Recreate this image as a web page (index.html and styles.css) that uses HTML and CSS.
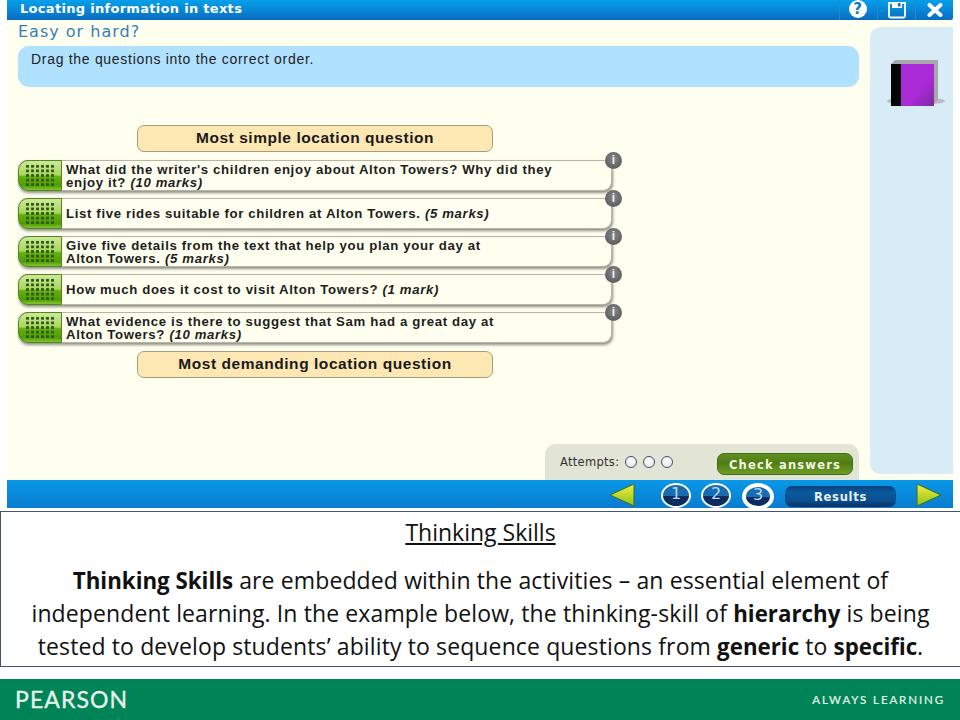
FILE: index.html
```html
<!DOCTYPE html>
<html lang="en">
<head>
<meta charset="utf-8">
<title>Thinking Skills</title>
<link rel="stylesheet" href="styles.css">
</head>
<body>
<section class="app">
  <header class="topbar">
    <span class="topbar-title">Locating information in texts</span>
    <div class="tools">
      <span class="tool"><span class="help">?</span></span>
      <span class="tool">
        <svg width="20" height="18" viewBox="0 0 20 18"><path d="M2 2h16v13a1.5 1.5 0 0 1-1.5 1.5h-13A1.500 1.500 0 0 1 2 15z" fill="none" stroke="#fff" stroke-width="1.8"/><path d="M5 1h10v6H5z" fill="#fff"/><rect x="11" y="2" width="2.500" height="3.500" fill="#0a78c8"/></svg>
      </span>
      <span class="tool">
        <svg width="16" height="14" viewBox="0 0 16 14"><path d="M2.500 2l11 10M13.500 2l-11 10" stroke="#fff" stroke-width="4" stroke-linecap="round"/></svg>
      </span>
    </div>
  </header>
  <div class="main">
    <div class="content">
      <h1 class="title">Easy or hard?</h1>
      <div class="instruction">Drag the questions into the correct order.</div>
      <div class="label">Most simple location question</div>
      <ul class="rows">
        <li class="row"><span class="handle"></span><p class="row-text">What did the writer's children enjoy about Alton Towers? Why did they<br>enjoy it? <em>(10 marks)</em></p><span class="info">i</span></li>
        <li class="row"><span class="handle"></span><p class="row-text">List five rides suitable for children at Alton Towers. <em>(5 marks)</em></p><span class="info">i</span></li>
        <li class="row"><span class="handle"></span><p class="row-text">Give five details from the text that help you plan your day at<br>Alton Towers. <em>(5 marks)</em></p><span class="info">i</span></li>
        <li class="row"><span class="handle"></span><p class="row-text">How much does it cost to visit Alton Towers? <em>(1 mark)</em></p><span class="info">i</span></li>
        <li class="row"><span class="handle"></span><p class="row-text">What evidence is there to suggest that Sam had a great day at<br>Alton Towers? <em>(10 marks)</em></p><span class="info">i</span></li>
      </ul>
      <div class="label label-end">Most demanding location question</div>
      <div class="spacer"></div>
      <div class="attempts">
        <span class="attempts-label">Attempts:</span>
        <span class="dot"></span><span class="dot"></span><span class="dot"></span>
        <span class="check">Check answers</span>
      </div>
    </div>
    <aside class="side">
      <svg class="book" width="60" height="50" viewBox="0 0 60 50">
        <defs>
          <linearGradient id="cover" x1="0" y1="0" x2="1" y2="1"><stop offset="0.6" stop-color="#a92bd8"/><stop offset="1" stop-color="#7a2a9c"/></linearGradient>
        </defs>
        <ellipse cx="29" cy="42" rx="29" ry="4" fill="#b8bcc0"/>
        <path d="M4 5l4-4h43v40l-4 4z" fill="#a9a9ad"/>
        <rect x="4" y="5" width="10" height="42" fill="#050505"/>
        <rect x="14" y="5" width="33" height="42" fill="url(#cover)"/>
      </svg>
    </aside>
  </div>
  <footer class="navbar">
    <svg class="arrow" width="26" height="24" viewBox="0 0 26 24"><defs><linearGradient id="ya" x1="0" y1="0" x2="0" y2="1"><stop offset="0" stop-color="#f4f03c"/><stop offset="1" stop-color="#8cc020"/></linearGradient></defs><path d="M1 12L25 1v22z" fill="url(#ya)" stroke="#3a6a20"/></svg>
    <span class="step">1</span>
    <span class="step">2</span>
    <span class="step step-current">3</span>
    <span class="results">Results</span>
    <svg class="arrow" width="26" height="24" viewBox="0 0 26 24"><path d="M25 12L1 1v22z" fill="url(#ya)" stroke="#3a6a20"/></svg>
  </footer>
</section>
<section class="note">
  <h2 class="note-title">Thinking Skills</h2>
  <p class="note-text"><b>Thinking Skills</b> are embedded within the activities – an essential element of independent learning. In the example below, the thinking-skill of <b>hierarchy</b> is being tested to develop students’ ability to sequence questions from <b>generic</b> to <b>specific</b>.</p>
</section>
<footer class="brand">
  <span class="brand-name">PEARSON</span>
  <span class="brand-tag">ALWAYS LEARNING</span>
</footer>
</body>
</html>
```
FILE: styles.css
```css
* { box-sizing: border-box; }
html, body { margin: 0; padding: 0; }
body { width: 960px; height: 720px; background: #fff; overflow: hidden; font-family: "Liberation Sans", Arial, sans-serif; }

.app { height: 511px; padding: 0 7px; display: flex; flex-direction: column; background: #fff; }

.topbar { height: 20px; flex: none; display: flex; align-items: center; justify-content: space-between; padding-left: 13px; background: linear-gradient(#05a0ea, #0a6cc0); border-bottom-right-radius: 2px; }
.topbar-title { font: bold 13px/20px "DejaVu Sans", sans-serif; color: #fff; letter-spacing: .3px; margin-top: -3px; }
.tools { display: flex; height: 20px; }
.tool { width: 38px; display: flex; align-items: center; justify-content: center; border-left: 1px solid #1c8ad4; }
.help { width: 18px; height: 18px; margin: -2px 2px 0 0; border-radius: 50%; background: #fff; color: #0a78c8; font: bold 15px/18px "DejaVu Sans", sans-serif; text-align: center; }

.main { height: 460px; flex: none; display: flex; background: #fffff0; }
.content { width: 863px; flex: none; display: flex; flex-direction: column; padding: 0 11px; }
.title { margin: 4px 0 0; font: normal 16px/16px "DejaVu Sans", sans-serif; color: #3a7db5; letter-spacing: 1px; }
.instruction { margin-top: 6px; height: 41px; padding: 5px 13px; border-radius: 11px; background: #b0e1ff; font-size: 14px; line-height: 16px; letter-spacing: .7px; color: #222; }

.label { margin: 38px 0 0 119px; width: 356px; height: 27px; flex: none; border: 1px solid #a39d82; border-radius: 7px; background: #fde8b4; font-size: 15.500px; font-weight: bold; line-height: 24px; letter-spacing: .55px; text-align: center; color: #1a1a1a; }
.label-end { margin-top: 8px; }

.rows { list-style: none; margin: 8px 0 0; padding: 0; width: 605px; display: flex; flex-direction: column; gap: 7px; }
.row { position: relative; height: 31px; display: flex; width: 594px; background: #fffff0; border: 1px solid #b5b5a8; border-left: 0; border-radius: 9px; box-shadow: 1px 2px 3px #8f8f85; }
.handle { width: 44px; flex: none; margin: -1px 0; padding: 3px 6px; border-radius: 10px 0 0 10px; border: 1px solid #4c8a1a; background: linear-gradient(#cfe79c 0, #a9d560 48%, #66b00e 54%, #4f9c06 85%, #82c62e 100%); }
.handle::before { content: ""; display: block; height: 100%; background-image: radial-gradient(circle, #2c5a10 1.300px, transparent 1.800px); background-size: 5px 4.600px; }
.row-text { margin: 0; padding-left: 4px; align-self: center; font-size: 13.200px; font-weight: bold; line-height: 13px; color: #1d1d1d; letter-spacing: .65px; }
.info { position: absolute; right: -11px; top: -9px; width: 17px; height: 17px; border-radius: 50%; background: radial-gradient(circle at 50% 40%, #888, #4d4f55); color: #eee; font: bold 12px/17px "Liberation Sans", sans-serif; text-align: center; }

.spacer { flex: 1; }
.attempts { margin-left: 527px; width: 314px; height: 36px; flex: none; display: flex; align-items: center; gap: 6px; padding-left: 15px; background: #e2e4d5; border-radius: 11px 11px 0 0; }
.attempts-label { font: 11.500px "DejaVu Sans", sans-serif; letter-spacing: .3px; color: #333; margin-top: -1px; }
.dot { width: 12px; height: 12px; margin-top: -1px; border-radius: 50%; background: radial-gradient(circle at 50% 35%, #fff, #d6e4f0); border: 1px solid #44505c; }
.check { margin-left: auto; margin-right: 6px; width: 136px; height: 22px; margin-top: 3px; border-radius: 7px; background: linear-gradient(#5f8f20, #4f7d14 45%, #6e9e26); border: 1px solid #456e10; color: #f4f4e0; font: bold 11.500px/23px "DejaVu Sans", sans-serif; letter-spacing: 1.200px; text-align: center; }

.side { width: 83px; flex: none; margin: 7px 0 6px; background: #d8ecf8; border-radius: 10px 0 0 10px; }
.book { display: block; margin: 32px 0 0 17px; }

.navbar { height: 28px; flex: none; display: flex; align-items: center; padding-left: 602px; background: linear-gradient(#0898e8, #0a7cd0); overflow: hidden; }
.navbar .arrow { flex: none; margin-top: 1px; }
.navbar .results + .arrow { margin-left: 20px; }
.step { flex: none; width: 30px; height: 25px; margin: 2px 0 0 10px; border-radius: 50%; border: 2.500px solid #fff; background: linear-gradient(#1a6cb0 50%, #0a2c60 52%); color: #bcd8ee; font: 16px/18px "DejaVu Sans", sans-serif; text-align: center; }
.navbar .arrow + .step { margin-left: 26px; }
.step-current { width: 32px; height: 27px; border-width: 4px; margin-left: 11px; margin-top: 4px; line-height: 16px; }
.results { flex: none; width: 111px; height: 21px; margin-left: 11px; margin-top: 5px; border-radius: 7px; background: linear-gradient(#0c3f7e, #0a5a9c 30%, #0a4f90 70%, #0c3060); color: #e8f0f4; font: bold 11.500px/22px "DejaVu Sans", sans-serif; letter-spacing: .7px; text-align: center; }

.note { height: 156px; border: 1px solid #3f5673; border-right: 0; background: #fff; padding: 0 25px; text-align: center; color: #111; font-family: "Open Sans", sans-serif; }
.note-title { margin: 4px 0 0; font-size: 23px; font-weight: normal; line-height: 32px; text-decoration: underline; }
.note-text { margin: 16px 0 0; font-size: 23px; line-height: 32px; letter-spacing: .12px; }
.note-text b { font-size: 22.300px; letter-spacing: 0; }

.brand { margin-top: 12px; height: 41px; display: flex; align-items: center; justify-content: space-between; padding: 0 15px; background: #008457; color: #e6f4ec; }
.brand-name { font: 23px/41px Lato, sans-serif; letter-spacing: 1.100px; -webkit-text-stroke: .35px #e6f4ec; }
.brand-tag { font: 11.500px/41px Lato, sans-serif; letter-spacing: 1.900px; -webkit-text-stroke: .2px #e6f4ec; }
```
